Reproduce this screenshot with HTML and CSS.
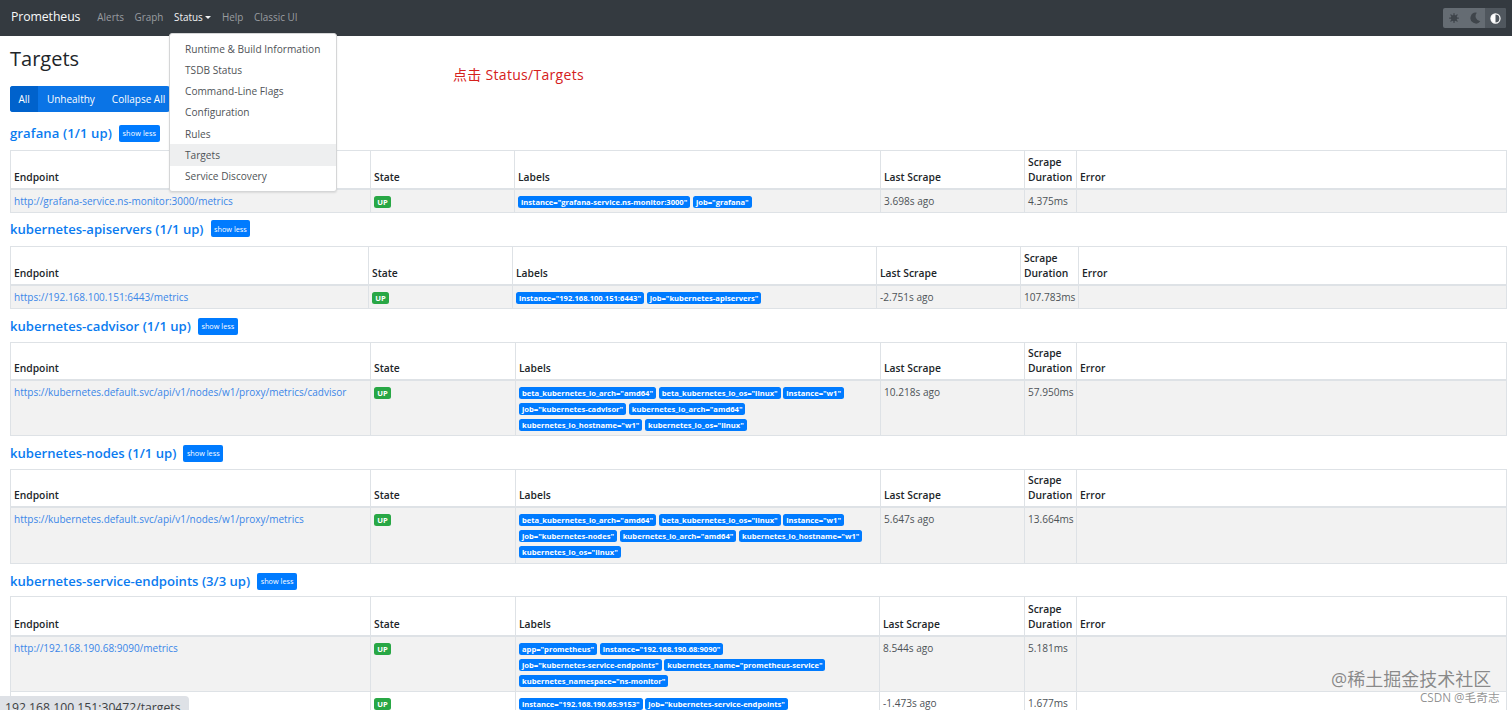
FILE: index.html
```html
<!DOCTYPE html>
<html lang="en">
<head>
<meta charset="utf-8">
<title>Targets</title>
<link rel="stylesheet" href="styles.css">
</head>
<body>
<nav class="navbar">
  <a class="brand">Prometheus</a>
  <a class="nav-link">Alerts</a>
  <a class="nav-link">Graph</a>
  <a class="nav-link active">Status<span class="caret"></span></a>
  <a class="nav-link">Help</a>
  <a class="nav-link">Classic UI</a>
  <div class="theme">
    <span class="theme-btn">
      <svg width="10" height="10" viewBox="0 0 16 16"><circle cx="8" cy="8" r="5" fill="#3f454b"/><g stroke="#3f454b" stroke-width="2" stroke-linecap="round"><path d="M8 1v2M8 13v2M1 8h2M13 8h2M3 3l1.400 1.400M11.600 11.600L13 13M3 13l1.400-1.400M11.600 4.400L13 3"/></g></svg>
    </span>
    <span class="theme-btn">
      <svg width="12" height="12" viewBox="0 0 16 16"><path d="M10.500 1A7.200 7.200 0 1 0 15 12.300 6.800 6.800 0 0 1 10.500 1z" fill="#3f454b"/></svg>
    </span>
    <span class="theme-btn on">
      <svg width="11" height="11" viewBox="0 0 16 16"><circle cx="8" cy="8" r="6.600" fill="none" stroke="#fff" stroke-width="1.800"/><path d="M8 1.400a6.600 6.600 0 0 0 0 13.200z" fill="#fff"/></svg>
    </span>
  </div>
</nav>

<div class="dropdown">
  <a class="dd-item">Runtime &amp; Build Information</a>
  <a class="dd-item">TSDB Status</a>
  <a class="dd-item">Command-Line Flags</a>
  <a class="dd-item">Configuration</a>
  <a class="dd-item">Rules</a>
  <a class="dd-item hover">Targets</a>
  <a class="dd-item">Service Discovery</a>
</div>

<div class="note">点击 Status/Targets</div>

<main class="container">
  <h1 class="title">Targets</h1>
  <div class="btn-group">
    <span class="seg on">All</span><span class="seg">Unhealthy</span><span class="seg">Collapse All</span>
  </div>

  <section class="pool p1">
    <h3 class="pool-head"><a>grafana (1/1 up)</a><span class="less">show less</span></h3>
    <table class="tbl">
      <colgroup><col class="c1"><col class="c2"><col class="c3"><col class="c4"><col class="c5"><col></colgroup>
      <thead><tr><th>Endpoint</th><th>State</th><th>Labels</th><th>Last Scrape</th><th>Scrape Duration</th><th>Error</th></tr></thead>
      <tbody><tr>
        <td><a class="link">http://grafana-service.ns-monitor:3000/metrics</a></td>
        <td class="lbs"><span class="up">UP</span></td>
        <td class="lbs"><span class="lb">instance="grafana-service.ns-monitor:3000"</span> <span class="lb">job="grafana"</span></td>
        <td>3.698s ago</td><td>4.375ms</td><td></td>
      </tr></tbody>
    </table>
  </section>

  <section class="pool p2">
    <h3 class="pool-head"><a>kubernetes-apiservers (1/1 up)</a><span class="less">show less</span></h3>
    <table class="tbl">
      <colgroup><col class="c1"><col class="c2"><col class="c3"><col class="c4"><col class="c5"><col></colgroup>
      <thead><tr><th>Endpoint</th><th>State</th><th>Labels</th><th>Last Scrape</th><th>Scrape Duration</th><th>Error</th></tr></thead>
      <tbody><tr>
        <td><a class="link">https://192.168.100.151:6443/metrics</a></td>
        <td class="lbs"><span class="up">UP</span></td>
        <td class="lbs"><span class="lb">instance="192.168.100.151:6443"</span> <span class="lb">job="kubernetes-apiservers"</span></td>
        <td>-2.751s ago</td><td>107.783ms</td><td></td>
      </tr></tbody>
    </table>
  </section>

  <section class="pool p3">
    <h3 class="pool-head"><a>kubernetes-cadvisor (1/1 up)</a><span class="less">show less</span></h3>
    <table class="tbl">
      <colgroup><col class="c1"><col class="c2"><col class="c3"><col class="c4"><col class="c5"><col></colgroup>
      <thead><tr><th>Endpoint</th><th>State</th><th>Labels</th><th>Last Scrape</th><th>Scrape Duration</th><th>Error</th></tr></thead>
      <tbody><tr>
        <td><a class="link">https://kubernetes.default.svc/api/v1/nodes/w1/proxy/metrics/cadvisor</a></td>
        <td class="lbs"><span class="up">UP</span></td>
        <td class="lbs"><span class="lb">beta_kubernetes_io_arch="amd64"</span> <span class="lb">beta_kubernetes_io_os="linux"</span> <span class="lb">instance="w1"</span><br><span class="lb">job="kubernetes-cadvisor"</span> <span class="lb">kubernetes_io_arch="amd64"</span><br><span class="lb">kubernetes_io_hostname="w1"</span> <span class="lb">kubernetes_io_os="linux"</span></td>
        <td>10.218s ago</td><td>57.950ms</td><td></td>
      </tr></tbody>
    </table>
  </section>

  <section class="pool p4">
    <h3 class="pool-head"><a>kubernetes-nodes (1/1 up)</a><span class="less">show less</span></h3>
    <table class="tbl">
      <colgroup><col class="c1"><col class="c2"><col class="c3"><col class="c4"><col class="c5"><col></colgroup>
      <thead><tr><th>Endpoint</th><th>State</th><th>Labels</th><th>Last Scrape</th><th>Scrape Duration</th><th>Error</th></tr></thead>
      <tbody><tr>
        <td><a class="link">https://kubernetes.default.svc/api/v1/nodes/w1/proxy/metrics</a></td>
        <td class="lbs"><span class="up">UP</span></td>
        <td class="lbs"><span class="lb">beta_kubernetes_io_arch="amd64"</span> <span class="lb">beta_kubernetes_io_os="linux"</span> <span class="lb">instance="w1"</span><br><span class="lb">job="kubernetes-nodes"</span> <span class="lb">kubernetes_io_arch="amd64"</span> <span class="lb">kubernetes_io_hostname="w1"</span><br><span class="lb">kubernetes_io_os="linux"</span></td>
        <td>5.647s ago</td><td>13.664ms</td><td></td>
      </tr></tbody>
    </table>
  </section>

  <section class="pool p5">
    <h3 class="pool-head"><a>kubernetes-service-endpoints (3/3 up)</a><span class="less">show less</span></h3>
    <table class="tbl">
      <colgroup><col class="c1"><col class="c2"><col class="c3"><col class="c4"><col class="c5"><col></colgroup>
      <thead><tr><th>Endpoint</th><th>State</th><th>Labels</th><th>Last Scrape</th><th>Scrape Duration</th><th>Error</th></tr></thead>
      <tbody>
      <tr>
        <td><a class="link">http://192.168.190.68:9090/metrics</a></td>
        <td class="lbs"><span class="up">UP</span></td>
        <td class="lbs"><span class="lb">app="prometheus"</span> <span class="lb">instance="192.168.190.68:9090"</span><br><span class="lb">job="kubernetes-service-endpoints"</span> <span class="lb">kubernetes_name="prometheus-service"</span><br><span class="lb">kubernetes_namespace="ns-monitor"</span></td>
        <td>8.544s ago</td><td>5.181ms</td><td></td>
      </tr>
      <tr class="plain">
        <td></td>
        <td class="lbs"><span class="up">UP</span></td>
        <td class="lbs"><span class="lb">instance="192.168.190.65:9153"</span> <span class="lb">job="kubernetes-service-endpoints"</span></td>
        <td>-1.473s ago</td><td>1.677ms</td><td></td>
      </tr>
      </tbody>
    </table>
  </section>
</main>

<div class="status-url">192.168.100.151:30472/targets</div>
<div class="wm1">@稀土掘金技术社区</div>
<div class="wm2">CSDN @毛奇志</div>
</body>
</html>
```
FILE: styles.css
```css
* { box-sizing: border-box; }
html, body { margin: 0; height: 710px; overflow: hidden; }
body {
  font-family: "Open Sans", "Noto Sans CJK SC", sans-serif;
  font-size: 10.5px;
  color: #212529;
  background: #fff;
  position: relative;
}
.navbar {
  height: 36px;
  background: #343a40;
  display: flex;
  align-items: center;
  padding: 0 6px 2px 11px;
}
.brand { font-size: 12.300px; color: #f8f9fa; margin-right: 17px; letter-spacing: -.1px; position: relative; top: -1px; }
.nav-link { color: #9a9da1; font-size: 9.900px; margin-right: 10.700px; }
.nav-link.active { color: #f2f3f4; }
.caret {
  display: inline-block;
  margin-left: 2.500px;
  vertical-align: 2px;
  border-top: 3.500px solid #f2f3f4;
  border-left: 3.500px solid transparent;
  border-right: 3.500px solid transparent;
}
.theme {
  margin: 2px 0 0 auto;
  width: 63px;
  height: 20px;
  background: #656c73;
  border-radius: 2px;
  display: flex;
  overflow: hidden;
}
.theme-btn { flex: 1; display: flex; align-items: center; justify-content: center; }
.theme-btn.on { background: #50575e; }

.dropdown {
  position: absolute;
  left: 169px;
  top: 33px;
  width: 168px;
  height: 159px;
  padding: 4px 0 4px;
  background: #fff;
  border: 1px solid #d5d6d7;
  border-radius: 3px;
  box-shadow: 0 1px 2px rgba(0,0,0,.1);
  z-index: 5;
  display: flex;
  flex-direction: column;
}
.dd-item { flex: 1; display: flex; align-items: center; padding: 0 15px; color: #4f5357; font-size: 10.150px; white-space: nowrap; }
.dd-item.hover { background: #eeeff0; }

.note {
  position: absolute;
  left: 453px;
  top: 66px;
  color: #d5201c;
  font-size: 14px;
  letter-spacing: .3px;
  line-height: 18px;
}

.container { padding: 0 5px 0 10px; }
.title { margin: 0; padding-top: 9px; height: 50px; font-size: 20px; line-height: 28px; font-weight: 400; color: #212529; }
.btn-group {
  display: inline-flex;
  height: 26px;
  border-radius: 3px;
  overflow: hidden;
  background: #0a74e6;
  color: #fff;
  width: 160px;
  vertical-align: top;
}
.seg { display: flex; align-items: center; padding: 0 8.500px; font-size: 10px; white-space: nowrap; }
.seg.on { background: #0062cc; }

.pool-head {
  margin: 0 0 5px;
  display: flex;
  align-items: center;
  height: 24px;
  font-size: 13.100px;
  font-weight: 600;
  color: #0a7bf0;
}
.p1 .pool-head { letter-spacing: .1px; }
.p3 .pool-head, .p4 .pool-head { margin-bottom: 4px; }
.p5 .pool-head { margin-bottom: 3px; }
.less {
  margin-left: 7px;
  height: 17px;
  padding: 0 3.500px;
  display: flex;
  align-items: center;
  background: #007bff;
  border-radius: 2px;
  color: #fff;
  font-size: 7.300px;
  font-weight: 400;
}
.p1 { margin-top: 9px; }
.p2 { margin-top: 4px; }
.p3, .p4, .p5 { margin-top: 5px; }

.tbl {
  width: 1497px;
  border-collapse: collapse;
  table-layout: fixed;
  font-size: 10.100px;
}
.tbl th, .tbl td { border: 1px solid #dee2e6; padding: 3px; vertical-align: top; }
.tbl th { vertical-align: bottom; text-align: left; font-size: 10.300px; font-weight: 600; color: #212529; line-height: 15px; border-bottom-width: 2px; }
.tbl thead tr { height: 38px; }
.p3 thead tr, .p4 thead tr { height: 37px; }
.p2 thead tr, .p5 thead tr { height: 39px; }
.tbl tbody tr { background: #f2f2f2; }
.tbl tbody tr.plain { background: #fff; }
.tbl td { color: #4d5257; line-height: 16px; }
.tbl td.lbs { line-height: 16px; }
.p4 .tbl td.lbs { padding-bottom: 4px; }
.c1 { width: 360px; }
.c2 { width: 144px; }
.c3 { width: 366px; }
.c4 { width: 144px; }
.c5 { width: 52px; }
.p2 .c1 { width: 358px; }
.p2 .c3 { width: 364px; }
.p2 .c5 { width: 58px; }
.p3 .c2, .p4 .c2, .p5 .c2 { width: 145px; }
.p3 .c3, .p4 .c3 { width: 365px; }
.p5 .c3 { width: 364px; }
.p5 .c4 { width: 145px; }
.link { color: #3a86e8; font-size: 10px; }
.up {
  display: inline-block;
  background: #28a745;
  color: #fff;
  font-size: 7.600px;
  font-weight: 700;
  line-height: 12px;
  padding: 0 3.300px;
  border-radius: 2.500px;
}
.lb {
  display: inline-block;
  background: #007bff;
  color: #fff;
  font-size: 7.600px;
  font-weight: 700;
  line-height: 12px;
  padding: 0 3px;
  border-radius: 2.500px;
  white-space: nowrap;
}
.status-url {
  position: absolute;
  left: 0;
  bottom: 0;
  width: 189px;
  height: 14px;
  background: #dee1e6;
  border-top-right-radius: 4px;
  color: #3c4043;
  font-size: 12.200px;
  line-height: 24px;
  padding-left: 5px;
  overflow: hidden;
  white-space: nowrap;
}
.wm1, .wm2 { position: absolute; white-space: nowrap; }
.wm1 { left: 1331px; top: 667px; font-size: 18px; line-height: 24px; color: rgba(90,90,90,.7); }
.wm2 { left: 1420px; top: 690px; font-size: 11.700px; line-height: 15px; color: rgba(110,110,110,.75); }
```
